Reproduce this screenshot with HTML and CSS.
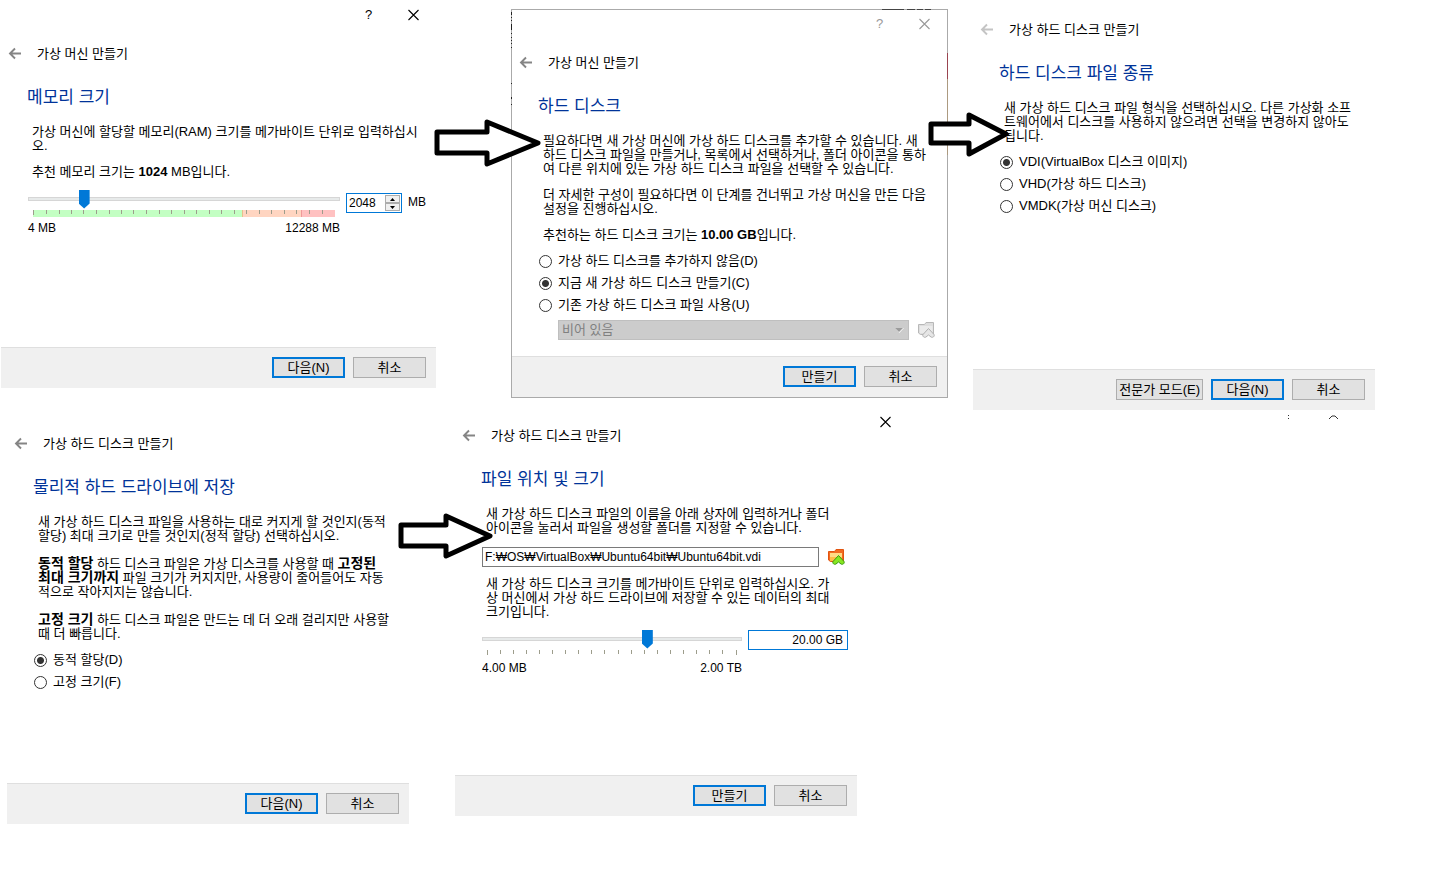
FILE: index.html
```html
<!DOCTYPE html>
<html lang="ko">
<head>
<meta charset="utf-8">
<title>가상 머신 만들기</title>
<link rel="stylesheet" href="styles.css">
</head>
<body>
<svg class="defs" width="0" height="0" aria-hidden="true">
  <symbol id="back" viewBox="0 0 14 14"><path d="M13 6.500H2M7 1.500L2 6.500l5 5" fill="none" stroke="currentColor" stroke-width="1.900"/></symbol>
  <symbol id="close" viewBox="0 0 12 12"><path d="M.5 1l10 10M10.500 1l-10 10" fill="none" stroke="currentColor" stroke-width="1.100"/></symbol>
</svg>
<main class="desktop">

  <section class="dialog memory">
    <div class="caption">
      <button class="cap" aria-label="도움말">?</button>
      <button class="cap" aria-label="닫기"><svg width="12" height="12"><use href="#close"/></svg></button>
    </div>
    <header class="nav"><button class="back" aria-label="뒤로"><svg width="14" height="14"><use href="#back"/></svg></button><span>가상 머신 만들기</span></header>
    <div class="page">
      <h1>메모리 크기</h1>
      <div class="copy">
        <p>가상 머신에 할당할 메모리(RAM) 크기를 메가바이트 단위로 입력하십시<br>오.</p>
        <p>추천 메모리 크기는 <b class="latin">1024</b> MB입니다.</p>
      </div>
      <div class="sizer">
        <div class="scale">
          <input type="range" aria-label="메모리 크기" min="0" max="1000" value="166">
          <svg class="ticks" width="302" height="7" viewBox="0 0 302 7">
            <path fill="#c3ffc3" d="M0 0h209v7H0z"/><path fill="#ffd5c1" d="M209 0h59v7h-59z"/><path fill="#ffc1c1" d="M268 0h34v7h-34z"/>
            <path fill="#e8c08c" d="M209 0h1v7h-1z"/><path fill="#f09a9a" d="M268 0h1v7h-1z"/>
            <path class="tick" d="M.5 0v5M13.5 0v4M26.5 0v4M38.5 0v4M50.5 0v4M63.5 0v4M76.5 0v4M88.5 0v4M100.5 0v4M113.5 0v4M126.5 0v4M138.5 0v4M151.5 0v4M163.5 0v4M176.5 0v4M188.5 0v4M201.5 0v4M213.5 0v4M226.5 0v4M238.5 0v4M251.5 0v4M263.5 0v4M276.5 0v4M289.5 0v4"/>
          </svg>
          <div class="ends"><span>4 MB</span><span>12288 MB</span></div>
        </div>
        <div class="spin">
          <input id="mem" type="text" inputmode="numeric" value="2048">
          <span class="steps">
            <button aria-label="증가"><svg width="5" height="3"><path d="M0 3L2.500 0 5 3z"/></svg></button>
            <button aria-label="감소"><svg width="5" height="3"><path d="M0 0h5L2.500 3z"/></svg></button>
          </span>
        </div>
        <label class="unit" for="mem">MB</label>
      </div>
    </div>
    <footer><button class="btn primary">다음(N)</button><button class="btn">취소</button></footer>
  </section>

  <section class="dialog disk">
    <div class="caption">
      <button class="cap" aria-label="도움말">?</button>
      <button class="cap" aria-label="닫기"><svg width="12" height="12"><use href="#close"/></svg></button>
    </div>
    <header class="nav"><button class="back" aria-label="뒤로"><svg width="14" height="14"><use href="#back"/></svg></button><span>가상 머신 만들기</span></header>
    <div class="page">
      <h1>하드 디스크</h1>
      <div class="copy">
        <p>필요하다면 새 가상 머신에 가상 하드 디스크를 추가할 수 있습니다. 새<br>하드 디스크 파일을 만들거나, 목록에서 선택하거나, 폴더 아이콘을 통하<br>여 다른 위치에 있는 가상 하드 디스크 파일을 선택할 수 있습니다.</p>
        <p>더 자세한 구성이 필요하다면 이 단계를 건너뛰고 가상 머신을 만든 다음<br>설정을 진행하십시오.</p>
        <p>추천하는 하드 디스크 크기는 <b class="latin">10.00 GB</b>입니다.</p>
      </div>
      <div class="options">
        <label><input type="radio" name="disk">가상 하드 디스크를 추가하지 않음(D)</label>
        <label><input type="radio" name="disk" checked>지금 새 가상 하드 디스크 만들기(C)</label>
        <label><input type="radio" name="disk">기존 가상 하드 디스크 파일 사용(U)</label>
      </div>
      <div class="existing">
        <span class="combo">
          <select disabled aria-label="기존 가상 하드 디스크 파일"><option>비어 있음</option></select>
          <svg class="chevron" width="9" height="5"><path d="M0 0h9L4.500 5z" fill="#f5f5f5"/><path d="M0 0h8L4 4z" fill="#9b9b9b"/></svg>
        </span>
        <button class="pick" disabled aria-label="폴더 선택">
          <svg width="17" height="17" viewBox="0 0 17 17"><path d="M.5 2.500h6l1.500-2h7.500v12H2.500L.5 11z" fill="#dedede" stroke="#b8b8b8"/><path d="M2 4h12.500v7H2z" fill="#ebebeb"/><path d="M10.500 6.500L16 12.500c1 2-1.500 3.500-3 2.500l-2.500-2L8 15c-1.500 1-4-.5-3-2.500z" fill="#e6e6e6" stroke="#b0b0b0"/></svg>
        </button>
      </div>
    </div>
    <footer><button class="btn primary">만들기</button><button class="btn">취소</button></footer>
    <svg class="debris" width="437" height="160" aria-hidden="true">
      <path d="M.5 3v3M.5 8v1M.5 11v1M.5 15v6M.5 24v1M.5 28v1M.5 31v1M.5 34v1M.5 38v1M.5 74v1M.5 88v2M.5 95v1" stroke="#222"/>
      <path d="M371 .5h22M396 .5h8M406 .5h6M414 .5h6" stroke="#444"/>
      <path d="M436.500 44v26" stroke="#9a4450"/><path d="M436.500 70v76" stroke="#ac9a80"/>
    </svg>
  </section>

  <section class="dialog kind">
    <header class="nav"><button class="back faded" aria-label="뒤로"><svg width="14" height="14"><use href="#back"/></svg></button><span>가상 하드 디스크 만들기</span></header>
    <div class="page">
      <h1>하드 디스크 파일 종류</h1>
      <div class="copy">
        <p>새 가상 하드 디스크 파일 형식을 선택하십시오. 다른 가상화 소프<br>트웨어에서 디스크를 사용하지 않으려면 선택을 변경하지 않아도<br>됩니다.</p>
      </div>
      <div class="options">
        <label><input type="radio" name="kind" checked>VDI(VirtualBox 디스크 이미지)</label>
        <label><input type="radio" name="kind">VHD(가상 하드 디스크)</label>
        <label><input type="radio" name="kind">VMDK(가상 머신 디스크)</label>
      </div>
    </div>
    <footer><button class="btn">전문가 모드(E)</button><button class="btn primary">다음(N)</button><button class="btn">취소</button></footer>
  </section>

  <section class="dialog storage">
    <header class="nav"><button class="back" aria-label="뒤로"><svg width="14" height="14"><use href="#back"/></svg></button><span>가상 하드 디스크 만들기</span></header>
    <div class="page">
      <h1>물리적 하드 드라이브에 저장</h1>
      <div class="copy loose">
        <p>새 가상 하드 디스크 파일을 사용하는 대로 커지게 할 것인지(동적<br>할당) 최대 크기로 만들 것인지(정적 할당) 선택하십시오.</p>
        <p><b>동적 할당</b> 하드 디스크 파일은 가상 디스크를 사용할 때 <b>고정된<br>최대 크기까지</b> 파일 크기가 커지지만, 사용량이 줄어들어도 자동<br>적으로 작아지지는 않습니다.</p>
        <p><b>고정 크기</b> 하드 디스크 파일은 만드는 데 더 오래 걸리지만 사용할<br>때 더 빠릅니다.</p>
      </div>
      <div class="options">
        <label><input type="radio" name="storage" checked>동적 할당(D)</label>
        <label><input type="radio" name="storage">고정 크기(F)</label>
      </div>
    </div>
    <footer><button class="btn primary">다음(N)</button><button class="btn">취소</button></footer>
  </section>

  <section class="dialog location">
    <header class="nav"><button class="back" aria-label="뒤로"><svg width="14" height="14"><use href="#back"/></svg></button><span>가상 하드 디스크 만들기</span></header>
    <div class="page">
      <h1>파일 위치 및 크기</h1>
      <div class="copy">
        <p>새 가상 하드 디스크 파일의 이름을 아래 상자에 입력하거나 폴더<br>아이콘을 눌러서 파일을 생성할 폴더를 지정할 수 있습니다.</p>
      </div>
      <div class="file">
        <input type="text" aria-label="파일 위치" value="F:₩OS₩VirtualBox₩Ubuntu64bit₩Ubuntu64bit.vdi">
        <button class="pick" aria-label="폴더 선택">
          <svg width="17" height="17" viewBox="0 0 17 17"><path d="M.5 2.500h6l1.500-2h7.500v12H2.500L.5 11z" fill="#f26a21" stroke="#e2540f"/><path d="M2 4h12v8H2z" fill="#ffdb85"/><path d="M2 8h12v4H2z" fill="#ffbd45"/><path d="M10.500 6.500L16 12.500c1 2-1.500 3.500-3 2.500l-2.500-2L8 15c-1.500 1-4-.5-3-2.500z" fill="#86e622" stroke="#399a10"/></svg>
        </button>
      </div>
      <div class="copy">
        <p>새 가상 하드 디스크 크기를 메가바이트 단위로 입력하십시오. 가<br>상 머신에서 가상 하드 드라이브에 저장할 수 있는 데이터의 최대<br>크기입니다.</p>
      </div>
      <div class="sizer">
        <div class="scale">
          <input type="range" aria-label="디스크 크기" min="0" max="1000" value="643">
          <svg class="ticks" width="250" height="7" viewBox="0 0 250 7">
            <path class="tick" d="M.5 0v5M13.500 0v4M26.500 0v4M39.500 0v4M52.500 0v4M65.500 0v4M78.500 0v4M91.500 0v4M104.500 0v4M117.500 0v4M131.500 0v4M144.500 0v4M157.500 0v4M170.500 0v4M183.500 0v4M196.500 0v4M209.500 0v4M222.500 0v4M235.500 0v4M249.500 0v5"/>
          </svg>
          <div class="ends"><span>4.00 MB</span><span>2.00 TB</span></div>
        </div>
        <input class="amount" type="text" aria-label="크기" value="20.00 GB">
      </div>
    </div>
    <footer><button class="btn primary">만들기</button><button class="btn">취소</button></footer>
    <button class="stray-close" aria-label="닫기"><svg width="12" height="12"><use href="#close"/></svg></button>
  </section>

  <svg class="arrow one" width="108" height="50" aria-hidden="true"><path d="M3 15h50V5l51 21-51 21V36H3z"/></svg>
  <svg class="arrow two" width="84" height="48" aria-hidden="true"><path d="M3 14h38V5l37 19-37 20V33H3z"/></svg>
  <svg class="arrow three" width="98" height="48" aria-hidden="true"><path d="M3 13h45V4l44 20-44 20V34H3z"/></svg>
  <svg class="remnant" width="54" height="5" aria-hidden="true"><path d="M2.500 0v1M2.500 3v1M43 4l3-3h3l3 3" fill="none" stroke="#333"/></svg>
</main>
</body>
</html>
```
FILE: styles.css
```css
* { box-sizing: border-box; }

body {
  margin: 0;
  background: #fff;
  color: #000;
  font: 13px/14px "Liberation Sans", "Noto Sans CJK KR", sans-serif;
}

button, input, select { font: inherit; color: inherit; margin: 0; padding: 0; }
button { background: none; border: 0; }
svg { display: block; }
.defs { position: absolute; }

.desktop { position: relative; min-height: 100vh; overflow: hidden; }

/* Windows */
.dialog {
  position: absolute;
  display: flex;
  flex-direction: column;
  width: 402px;
  min-height: 400px;
  background: #fff;
  white-space: nowrap;
}
.memory { left: 1px; top: 0; width: 435px; min-height: 388px; }
.disk { left: 511px; top: 9px; width: 437px; min-height: 389px; border: 1px solid #aaa; }
.kind { left: 973px; top: 10px; }
.storage { left: 7px; top: 424px; }
.location { left: 455px; top: 416px; }

.caption {
  display: flex;
  justify-content: flex-end;
  align-items: center;
  height: 34px;
  padding-bottom: 4px;
}
.disk .caption { height: 33px; padding-bottom: 5px; color: #999; }
.cap { display: grid; place-items: center; width: 45px; height: 28px; font-size: 13px; }

.nav { display: flex; align-items: center; gap: 15px; height: 40px; padding-left: 7px; }
.back { color: #858585; }
.back.faded { color: #c4c4c4; }

.page { flex: 1; padding: 12px 9px 0 26px; }
.memory .page { padding-right: 10px; }
h1 { margin: 0; font-size: 17px; line-height: 24px; font-weight: 400; color: #003399; }
.copy { padding: 15px 0 0 5px; }
p { margin: 0 0 12px; }
.loose p { margin-bottom: 14px; }
.copy p:last-child { margin-bottom: 0; }
b { font-size: 14px; line-height: 0; }
b.latin { font-size: 13px; }

footer {
  display: flex;
  justify-content: flex-end;
  gap: 8px;
  padding: 9px 10px 10px;
  background: #f0f0f0;
  border-top: 1px solid #dfdfdf;
}
.btn {
  min-width: 73px;
  height: 21px;
  padding: 0 2px;
  background: #e1e1e1;
  border: 1px solid #adadad;
}
.btn.primary { border: 2px solid #0078d7; }

/* Radio groups */
.options { padding: 8px 0 0 1px; }
.options label { display: flex; align-items: center; gap: 6px; height: 22px; }
.options input {
  appearance: none;
  width: 13px;
  height: 13px;
  border: 1px solid #333;
  border-radius: 50%;
  background: #fff;
}
.options input:checked { background: radial-gradient(circle, #333 3px, #fff 4px); }

/* Disabled list of existing disks */
.existing { display: flex; align-items: center; gap: 9px; padding: 4px 3px 0 20px; }
.combo { position: relative; flex: 1; }
.combo select {
  display: block;
  appearance: none;
  width: 100%;
  height: 20px;
  padding: 0 3px;
  border: 1px solid #bfbfbf;
  border-radius: 0;
  background: #ccc;
  color: #808080;
  opacity: 1;
}
.chevron { position: absolute; right: 5px; top: 8px; }

/* Sliders */
.sizer { display: flex; gap: 6px; padding: 11px 0 0 1px; }
.scale { flex: 1; }
.scale input {
  display: block;
  appearance: none;
  width: 100%;
  height: 17px;
  background: none;
}
.scale input::-webkit-slider-runnable-track {
  height: 4px;
  background: #e7eaea;
  border: 1px solid #d6d6d6;
}
.scale input::-webkit-slider-thumb {
  appearance: none;
  width: 11px;
  height: 19px;
  margin-top: -8px;
  background: #0078d7;
  clip-path: polygon(0 0, 100% 0, 100% 14px, 50% 100%, 0 14px);
}
.ticks { margin: 3px 0 0 5px; }
.tick { fill: none; stroke: #9d9d8c; }
.ends { display: flex; justify-content: space-between; padding-top: 4px; font-size: 12px; }

.spin {
  display: flex;
  align-self: flex-start;
  width: 56px;
  height: 20px;
  margin-top: 3px;
  padding: 1px;
  border: 1px solid #0078d7;
}
.spin input { flex: 1; min-width: 0; border: 0; padding-left: 1px; font-size: 12px; outline: 0; }
.steps { display: grid; width: 15px; }
.steps button { display: grid; place-items: center; background: #f0f0f0; border: 1px solid #acacac; }
.unit { margin-top: 5px; font-size: 12px; }

/* File location */
.file { display: flex; align-items: center; gap: 9px; padding: 12px 3px 0 1px; }
.file input {
  flex: 1;
  min-width: 0;
  height: 20px;
  padding: 0 2px;
  border: 1px solid #7a7a7a;
  font-size: 12px;
}
.file + .copy { padding-top: 10px; }
.location .scale { flex: 0 0 260px; }
.amount {
  width: 100px;
  height: 20px;
  padding: 0 4px;
  border: 1px solid #0078d7;
  font-size: 12px;
  text-align: right;
}

/* Loose pieces lying over the windows */
.debris { position: absolute; left: -1px; top: -1px; pointer-events: none; }
.stray-close { position: absolute; left: 425px; top: 0; }
.arrow { position: absolute; }
.arrow path { fill: #fff; stroke: #000; stroke-width: 5px; stroke-linejoin: round; }
.one { left: 434px; top: 117px; }
.two { left: 928px; top: 110px; }
.three { left: 398px; top: 512px; }
.remnant { position: absolute; left: 1286px; top: 415px; }
```
